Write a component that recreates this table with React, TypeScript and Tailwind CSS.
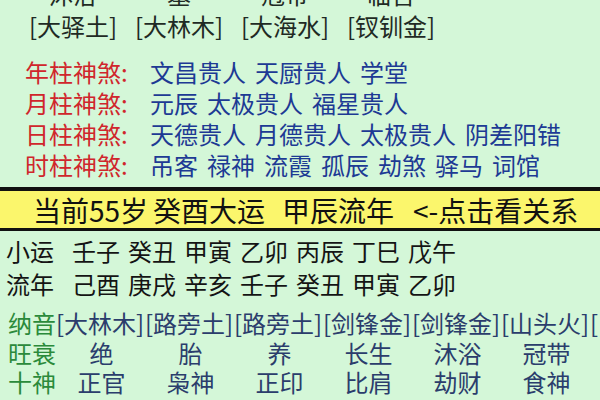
const cjk = { fontFamily: '"Noto Sans CJK SC", "Noto Sans", sans-serif' };

const shensha = [
  { label: '年柱神煞:', items: ['文昌贵人', '天厨贵人', '学堂'] },
  { label: '月柱神煞:', items: ['元辰', '太极贵人', '福星贵人'] },
  { label: '日柱神煞:', items: ['天德贵人', '月德贵人', '太极贵人', '阴差阳错'] },
  { label: '时柱神煞:', items: ['吊客', '禄神', '流霞', '孤辰', '劫煞', '驿马', '词馆'] },
];

const nayin = ['[大林木]', '[路旁土]', '[路旁土]', '[剑锋金]', '[剑锋金]', '[山头火]', '['];
const wangshuai = ['绝', '胎', '养', '长生', '沐浴', '冠带'];
const shishen = ['正官', '枭神', '正印', '比肩', '劫财', '食神'];

function GanZhiRow({ label, items, h }: { label: string; items: string[]; h: string }) {
  return (
    <div className={`flex items-center pl-[6px] text-[24px] text-[#141414] ${h}`}>
      <span className="w-[66px]">{label}</span>
      <div className="flex gap-[8px]">
        {items.map((s, i) => (
          <span key={i}>{s}</span>
        ))}
      </div>
    </div>
  );
}

function ColRow({ label, items, h, center }: { label: string; items: string[]; h: string; center?: boolean }) {
  return (
    <div className={`flex items-center pl-[8px] text-[24px] whitespace-nowrap ${h}`}>
      <span className="w-[49px] text-[#2b8a3b]">{label}</span>
      {items.map((s, i) => (
        <span key={i} className={`w-[89px] shrink-0 text-[#2b3d6c] ${center ? 'text-center' : ''}`}>
          {s}
        </span>
      ))}
    </div>
  );
}

export default function App() {
  return (
    <div className="w-[600px] h-[400px] overflow-hidden bg-[#d4f7d8] leading-none" style={cjk}>
      {/* row cut off by the top edge */}
      <div className="-mt-[24px] h-[36px] flex items-center pl-[20px] text-[24px] text-[#1f2a24]">
        {['沐浴', '墓', '冠带', '临官'].map((s, i) => (
          <span key={i} className="w-[106px] text-center">{s}</span>
        ))}
      </div>

      {/* nayin of the four pillars */}
      <div className="h-[28px] flex items-center pl-[20px] text-[24px] text-[#1f2a24]">
        {['[大驿土]', '[大林木]', '[大海水]', '[钗钏金]'].map((s, i) => (
          <span key={i} className="w-[106px] text-center">{s}</span>
        ))}
      </div>

      <div className="mt-[16px]">
        {shensha.map((r) => (
          <div key={r.label} className="h-[31px] flex items-center pl-[25px] text-[24px]">
            <span className="w-[125px] text-[#d0262c]">{r.label}</span>
            <div className="flex gap-[9px] text-[#1d3a94]">
              {r.items.map((s, i) => (
                <span key={i}>{s}</span>
              ))}
            </div>
          </div>
        ))}
      </div>

      {/* current luck bar */}
      <div className="mt-[7px] border-t-4 border-b-[3px] border-[#111] bg-[#fbf66c] h-[44px] flex items-center pl-[33px] text-[28px] text-[#111] whitespace-nowrap">
        <span className="w-[120px]">当前55岁</span>
        <span className="w-[129px]">癸酉大运</span>
        <span className="w-[131px]">甲辰流年</span>
        <span>&lt;-点击看关系</span>
      </div>

      <div className="mt-[4px]">
        <GanZhiRow label="小运" items={['壬子', '癸丑', '甲寅', '乙卯', '丙辰', '丁巳', '戊午']} h="h-[32px]" />
        <GanZhiRow label="流年" items={['己酉', '庚戌', '辛亥', '壬子', '癸丑', '甲寅', '乙卯']} h="h-[34px]" />
      </div>

      <div className="mt-[7px]">
        <ColRow label="纳音" items={nayin} h="h-[30px]" />
        <ColRow label="旺衰" items={wangshuai} h="h-[29px]" center />
        <ColRow label="十神" items={shishen} h="h-[29px]" center />
      </div>
    </div>
  );
}
